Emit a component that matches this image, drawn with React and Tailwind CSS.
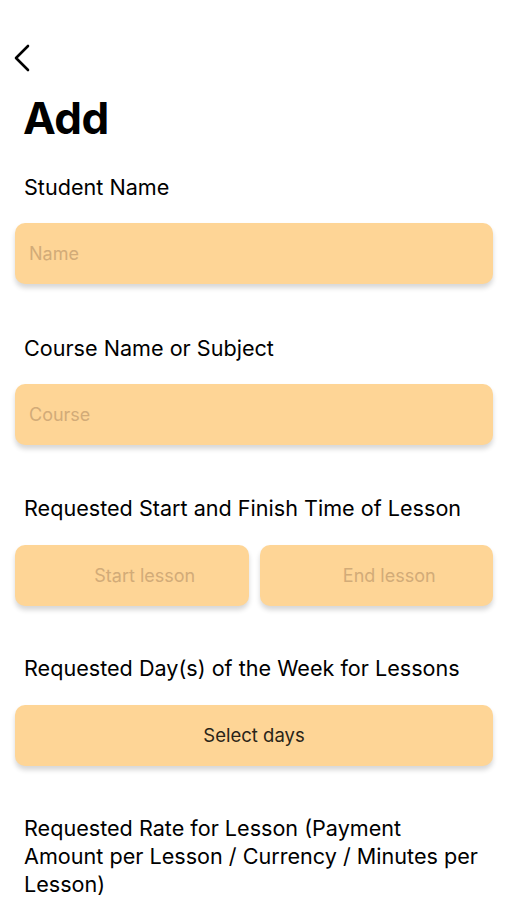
export default function App() {
  const font = { fontFamily: 'Inter, "Noto Sans", sans-serif' };
  const box =
    "h-[61px] rounded-[10px] bg-[#fed596] shadow-[0_4px_5px_rgba(0,0,0,0.16)] flex items-center";
  const label = "pl-[9px] pr-[12px] text-[21.6px] leading-[28px]";
  return (
    <div className="w-[507px] h-[900px] bg-white overflow-hidden text-black" style={font}>
      <div className="pt-[44px] pl-[13px]">
        <svg className="block" width="18" height="28" viewBox="0 0 18 28" fill="none">
          <path d="M15 2 L3 14 L15 26" stroke="black" strokeWidth="2.6" strokeLinecap="round" strokeLinejoin="round" />
        </svg>
      </div>
      <h1 className="pl-[23px] mt-[21px] text-[44px] font-bold leading-[50px] tracking-[-0.5px]">Add</h1>
      <div className="flex flex-col px-[15px] pr-[14px]">
        <div className={`${label} mt-[30px]`}>Student Name</div>
        <div className={`${box} mt-[22px] pl-[14px]`}>
          <span className="text-[18px] text-[#d2ab78]">Name</span>
        </div>
        <div className={`${label} mt-[50px]`}>Course Name or Subject</div>
        <div className={`${box} mt-[22px] pl-[14px]`}>
          <span className="text-[18px] text-[#d2ab78]">Course</span>
        </div>
        <div className={`${label} mt-[49px]`}>Requested Start and Finish Time of Lesson</div>
        <div className="mt-[23px] flex gap-[11px]">
          <div className={`${box} flex-1 justify-center pl-[26px]`}>
            <span className="text-[18px] text-[#d2ab78]">Start lesson</span>
          </div>
          <div className={`${box} flex-1 justify-center pl-[26px]`}>
            <span className="text-[18px] text-[#d2ab78]">End lesson</span>
          </div>
        </div>
        <div className={`${label} mt-[48px]`}>Requested Day(s) of the Week for Lessons</div>
        <div className={`${box} mt-[23px] justify-center`}>
          <span className="text-[18.5px] text-[#2a2418]">Select days</span>
        </div>
        <div className={`${label} mt-[48px]`}>
          Requested Rate for Lesson (Payment Amount per Lesson / Currency / Minutes per Lesson)
        </div>
      </div>
    </div>
  );
}
